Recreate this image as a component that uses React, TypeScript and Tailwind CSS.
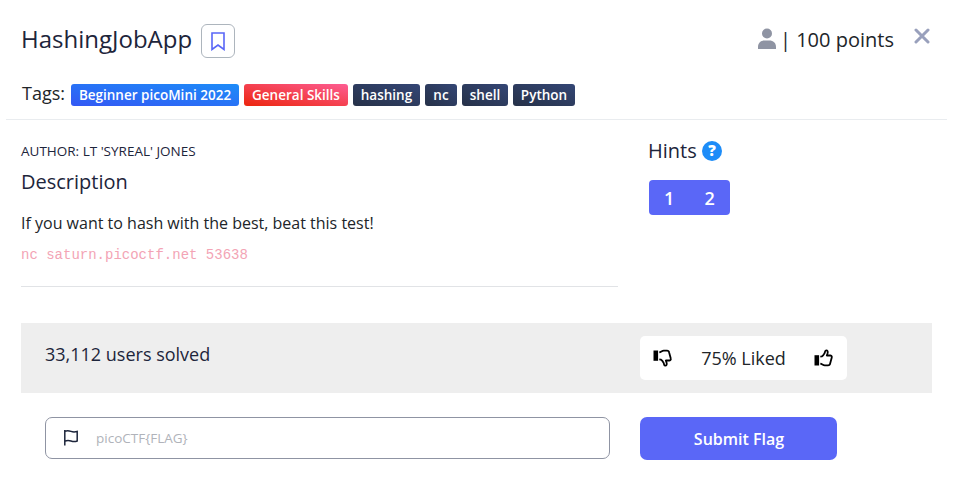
import React from "react";

const tags = [
  { label: "Beginner picoMini 2022", width: "w-[168px]", color: "bg-[linear-gradient(to_bottom_left,#1d8cf8,#3358f4)]" },
  { label: "General Skills", width: "w-[104px]", color: "bg-[linear-gradient(to_bottom_left,#fd5d93,#ec250d)]" },
  { label: "hashing", width: "w-[67px]", color: "bg-[linear-gradient(to_bottom_left,#344675,#263148)]" },
  { label: "nc", width: "w-[32px]", color: "bg-[linear-gradient(to_bottom_left,#344675,#263148)]" },
  { label: "shell", width: "w-[46px]", color: "bg-[linear-gradient(to_bottom_left,#344675,#263148)]" },
  { label: "Python", width: "w-[62px]", color: "bg-[linear-gradient(to_bottom_left,#344675,#263148)]" },
];

function Thumb({ down = false }: { down?: boolean }) {
  return (
    <svg width="19" height="18" viewBox="0 0 19 18" className={down ? "-scale-y-100" : ""}>
      <path d="M0.5 6.2h4.6v10.3H0.5z" fill="#000" />
      <path
        d="M6.3 7.6l1.5-.2c1.2-.8 2.3-2.3 2.8-3.3.5-1 .3-2.6 1.4-2.7 1.5-.2 2.1 1.4 1.6 2.9l-.8 2.2h3.6c1.5.1 1.6 1.3 1.3 2.2l-1.5 5.6c-.3 1.6-1 2-2.2 2h-3.2c-1.8 0-2.6-1.3-4.5-1.7"
        fill="none"
        stroke="#000"
        strokeWidth="1.8"
        strokeLinejoin="round"
      />
    </svg>
  );
}

export default function App() {
  return (
    <main className="h-[497px] w-[953px] overflow-hidden bg-white font-['Open_Sans','Noto_Sans',sans-serif] text-[#212529]">
      <header className="mx-[6px] h-[120px] border-b border-[#e9ecef] pl-[15px]">
        <div className="flex h-[84px] items-start">
          <h1 className="mt-[21px] w-[180px] text-[24px] leading-[36px] whitespace-nowrap text-[#1d253b]">HashingJobApp</h1>
          <button className="mt-[24px] flex h-[34px] w-[34px] items-center justify-center rounded-[6px] border border-[#adb5bd]">
            <svg width="14" height="19" viewBox="0 0 14 19" fill="none" stroke="#5a67f7" strokeWidth="1.6">
              <path d="M1 1h12v16.5l-6-4.5-6 4.5z" />
            </svg>
          </button>
          <div className="mt-[24px] ml-[522px] flex h-[32px] w-[149px] items-start">
            <svg width="18" height="22" viewBox="0 0 18 22" className="mt-[4px] ml-px shrink-0" fill="#8f94a3">
              <circle cx="9" cy="5.5" r="5" />
              <path d="M0 21v-2c0-4 3-6.4 6.4-6.4h5.2c3.4 0 6.4 2.4 6.4 6.4v2z" />
            </svg>
            <span className="ml-[4px] text-[20px] leading-[32px] whitespace-nowrap">| 100 points</span>
          </div>
          <button className="mt-[28px] ml-[8px]">
            <svg width="16" height="16" viewBox="0 0 16 16" stroke="#99a0bc" strokeWidth="3" strokeLinecap="round">
              <path d="M2 2l12 12M14 2L2 14" />
            </svg>
          </button>
        </div>
        <div className="flex h-[22px] items-center gap-[5px]">
          <span className="-mt-[4px] w-[45px] pl-px text-[18px] leading-[20px]">Tags:</span>
          {tags.map((t) => (
            <span key={t.label} className={`${t.width} ${t.color} flex h-[22px] shrink-0 items-center justify-center rounded-[3px] text-[13.5px] leading-[22px] font-semibold whitespace-nowrap text-white`}>
              {t.label}
            </span>
          ))}
        </div>
      </header>

      <section className="flex h-[203px] pl-[21px]">
        <div className="h-[167px] w-[597px] border-b border-[#e1e3e6]">
          <h6 className="mt-[21px] text-[13.5px] leading-[20px] text-[#1d253b]">AUTHOR: LT 'SYREAL' JONES</h6>
          <h4 className="mt-[8px] text-[20px] leading-[26px] text-[#1d253b]">Description</h4>
          <p className="mt-[16px] text-[16px] leading-[24px]">If you want to hash with the best, beat this test!</p>
          <code className="mt-[10px] block font-['Liberation_Mono',monospace] text-[14px] leading-[20px] text-[#f3a4b5]">nc saturn.picoctf.net 53638</code>
        </div>
        <aside className="ml-[30px] pt-[16px]">
          <div className="flex h-[30px] items-center">
            <h4 className="w-[54px] text-[20px] leading-[30px] text-[#1d253b]">Hints</h4>
            <span className="flex h-[20px] w-[20px] items-center justify-center rounded-full bg-[#1d8cf8] pb-px text-[15px] leading-none font-extrabold text-white">?</span>
          </div>
          <div className="mt-[14px] ml-px flex h-[35px] w-[81px] rounded-[4px] bg-[#5a67f7] text-[18px] leading-[37px] font-semibold text-white">
            <button className="flex-1">1</button>
            <button className="flex-1">2</button>
          </div>
        </aside>
      </section>

      <section className="mx-[21px] flex h-[70px] bg-[#eeeeee] pl-[24px]">
        <p className="mt-[17px] w-[595px] text-[18px] leading-[28px] text-[#1d253b]">33,112 users solved</p>
        <div className="mt-[13px] flex h-[44px] w-[207px] items-center rounded-[5px] bg-white pl-[13px]">
          <Thumb down />
          <span className="w-[142px] pl-px text-center text-[18px]">75% Liked</span>
          <Thumb />
        </div>
      </section>

      <form className="mt-[24px] flex pl-[45px]" onSubmit={(e) => e.preventDefault()}>
        <label className="flex h-[42px] w-[565px] items-center rounded-[7px] border border-[#8f94a3] pl-[17px]">
          <svg width="16" height="18" viewBox="0 0 16 18" fill="none" stroke="#1d253b" strokeWidth="1.5">
            <path d="M1.8 1v15.5M1.8 2.4c2-.9 3.8-.8 6.2 0s4.200.6 6.200 0v9.600c-2 .8-3.800.8-6.200 0s-4.200-.7-6.200.2" />
          </svg>
          <input placeholder="picoCTF{FLAG}" className="ml-[17px] w-[480px] text-[13.5px] leading-[20px] outline-none placeholder:text-[#b0b3ba]" />
        </label>
        <button className="ml-[30px] h-[43px] w-[197px] rounded-[7px] bg-[#5a67f7] pl-px text-[16px] font-semibold text-white">Submit Flag</button>
      </form>
    </main>
  );
}
